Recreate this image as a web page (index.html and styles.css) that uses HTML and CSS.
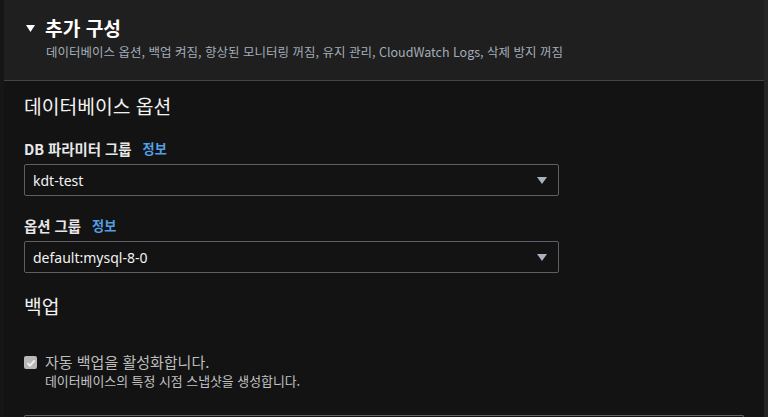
FILE: index.html
```html
<!DOCTYPE html>
<html lang="ko">
<head>
<meta charset="utf-8">
<link rel="stylesheet" href="styles.css">
</head>
<body>
<div class="frame">
  <div class="panel">
    <header class="header">
      <div class="title-row">
        <svg class="caret" width="9" height="7" viewBox="0 0 9 7"><path d="M0 0 H9 L4.5 7 Z" fill="#ffffff"/></svg>
        <h2 class="title">추가 구성</h2>
      </div>
      <p class="summary">데이터베이스 옵션, 백업 켜짐, 향상된 모니터링 꺼짐, 유지 관리, CloudWatch Logs, 삭제 방지 꺼짐</p>
    </header>
    <section class="body">
      <h3 class="section-title">데이터베이스 옵션</h3>
      <div class="field">
        <div class="label">DB 파라미터 그룹 <a class="info">정보</a></div>
        <div class="select">
          <span class="value">kdt-test</span>
          <svg class="arrow" width="10" height="7" viewBox="0 0 10 7"><path d="M0 0 H10 L5 7 Z" fill="#aab2bd"/></svg>
        </div>
      </div>
      <div class="field">
        <div class="label">옵션 그룹 <a class="info">정보</a></div>
        <div class="select">
          <span class="value">default:mysql-8-0</span>
          <svg class="arrow" width="10" height="7" viewBox="0 0 10 7"><path d="M0 0 H10 L5 7 Z" fill="#aab2bd"/></svg>
        </div>
      </div>
      <h3 class="section-title backup">백업</h3>
      <div class="check-row">
        <span class="checkbox">
          <svg width="12" height="12" viewBox="0 0 12 12"><path d="M2.5 6.2 L5 8.6 L9.6 3.4" fill="none" stroke="#f2f2f2" stroke-width="1.8"/></svg>
        </span>
        <div class="check-text">
          <div class="check-label">자동 백업을 활성화합니다.</div>
          <div class="check-desc">데이터베이스의 특정 시점 스냅샷을 생성합니다.</div>
        </div>
      </div>
      <div class="next-box"></div>
    </section>
  </div>
</div>
</body>
</html>
```
FILE: styles.css
```css
* { box-sizing: border-box; }
html, body { margin: 0; padding: 0; }
body {
  background: #161616;
  font-family: "Noto Sans", "Noto Sans CJK KR", sans-serif;
  width: 768px;
  height: 417px;
  overflow: hidden;
}
.frame {
  padding-left: 4px;
  padding-right: 4px;
  background: linear-gradient(to right, #161616 0 4px, transparent 4px calc(100% - 4px), #252525 calc(100% - 4px));
  height: 417px;
  overflow: hidden;
}
.panel {
  background: #131313;
  height: 100%;
  overflow: hidden;
}
.header {
  background: #1f1f1f;
  height: 81px;
  border-bottom: 1px solid #444444;
  padding: 16px 20px 0 22px;
}
.title-row {
  display: flex;
  align-items: center;
  gap: 10px;
  height: 24px;
}
.caret { display: block; margin-top: 1px; }
.title {
  margin: 0;
  font-family: "Noto Sans CJK KR", sans-serif;
  font-size: 19.2px;
  font-weight: 700;
  color: #ffffff;
  line-height: 24px;
}
.summary {
  margin: 3px 0 0 20px;
  font-family: "Noto Sans CJK KR", sans-serif;
  font-size: 12.5px;
  line-height: 18px;
  color: #a3adb9;
}
.body {
  padding: 12px 20px 0 20px;
}
.section-title {
  margin: 0;
  font-family: "Noto Sans CJK KR", sans-serif;
  font-size: 19.3px;
  font-weight: 400;
  color: #f2f2f2;
  line-height: 26px;
}
.field { margin-top: 20px; }
.field + .field { margin-top: 20px; }
.label {
  font-family: "Noto Sans CJK KR", sans-serif;
  font-size: 14.4px;
  font-weight: 700;
  color: #e8e8e8;
  line-height: 20px;
  display: flex;
  gap: 11px;
}
.info {
  color: #539fe5;
  font-weight: 700;
  font-size: 13.2px;
}
.select {
  margin-top: 5px;
  width: 535px;
  height: 32px;
  border: 1px solid #5c6066;
  border-radius: 2px;
  display: flex;
  align-items: center;
  justify-content: space-between;
  padding: 0 11px 0 8px;
}
.value {
  font-size: 14px;
  color: #f2f2f2;
}
.arrow { display: block; }
.backup { margin-top: 20px; }
.check-row {
  display: flex;
  gap: 8px;
  margin-top: 33px;
}
.checkbox {
  width: 13px;
  height: 13px;
  margin-top: 4px;
  border-radius: 2px;
  background: #b8b8b8;
  display: flex;
  align-items: center;
  justify-content: center;
}
.check-label {
  font-family: "Noto Sans CJK KR", sans-serif;
  font-size: 15px;
  line-height: 19px;
  color: #bdbdbd;
}
.check-desc {
  font-family: "Noto Sans CJK KR", sans-serif;
  font-size: 12.9px;
  line-height: 19px;
  color: #c2c2c2;
}
.next-box {
  margin-top: 25px;
  height: 3px;
  border: 1px solid #5f6368;
  border-bottom: none;
  border-radius: 2px 2px 0 0;
}
```
